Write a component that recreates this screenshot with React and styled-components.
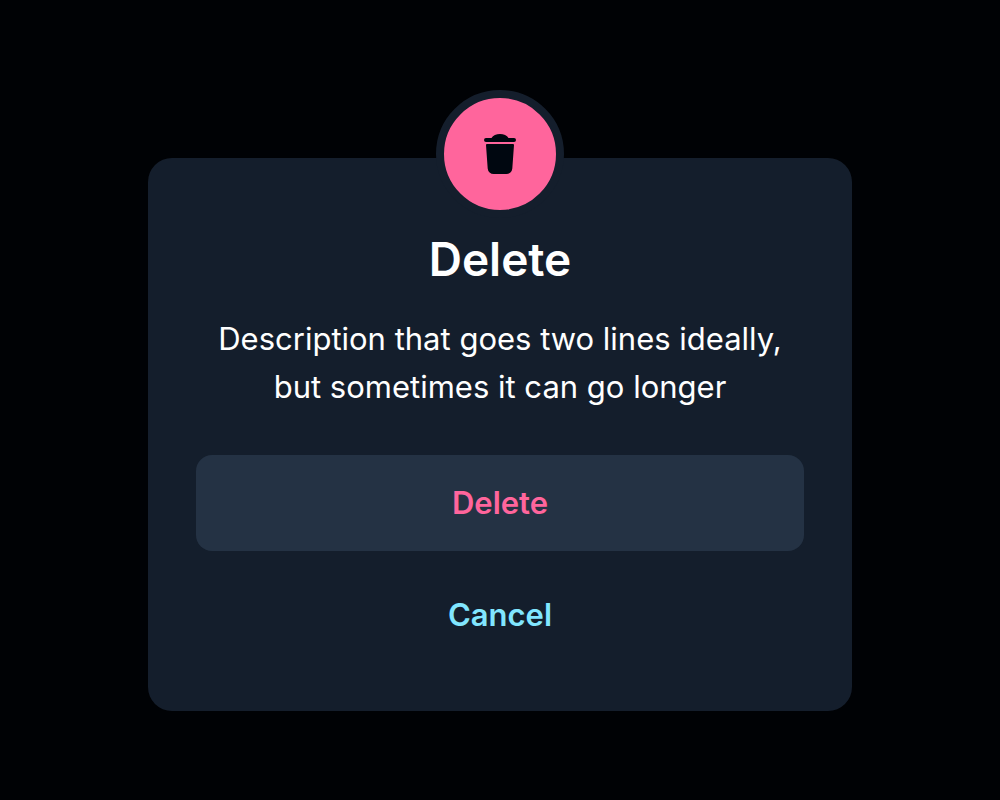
import React from "react";
import styled, { createGlobalStyle } from "styled-components";

const GlobalStyle = createGlobalStyle`
  *, *::before, *::after { box-sizing: border-box; }
  body {
    margin: 0;
    background: #000205;
    color: #ffffff;
    font-family: Inter, "Liberation Sans", sans-serif;
  }
`;

const Page = styled.main`
  min-height: 100vh;
  display: flex;
  align-items: center;
  justify-content: center;
  padding: 90px 24px 21px;
`;

const Dialog = styled.section`
  width: 100%;
  max-width: 704px;
  display: flex;
  flex-direction: column;
  align-items: center;
  padding: 0 48px 48px;
  border-radius: 24px;
  background: #141e2c;
`;

const Badge = styled.div`
  display: grid;
  place-items: center;
  width: 128px;
  height: 128px;
  margin-top: -68px;
  border: 8px solid #141e2c;
  border-radius: 50%;
  background: #ff659c;
`;

const Title = styled.h1`
  margin: 13px 0 0;
  font-size: 46px;
  line-height: 56px;
  font-weight: 600;
`;

const Description = styled.p`
  max-width: 580px;
  margin: 28px 0 0;
  font-size: 31px;
  line-height: 48px;
  text-align: center;
`;

const Actions = styled.div`
  width: 100%;
  display: flex;
  flex-direction: column;
  gap: 16px;
  margin-top: 44px;
`;

const Button = styled.button`
  height: 96px;
  padding: 0 16px 2px;
  border: 0;
  border-radius: 16px;
  background: ${(p) => (p.$tone === "danger" ? "#243244" : "transparent")};
  color: ${(p) => (p.$tone === "danger" ? "#ff659c" : "#81e6ff")};
  font: inherit;
  font-size: 31px;
  font-weight: 600;
  cursor: pointer;
`;

function TrashIcon() {
  return (
    <svg width="48" height="48" viewBox="0 0 48 48" fill="#000710" aria-hidden="true">
      <path d="M15.500 8C17 5.300 20.300 4 24 4s7 1.300 8.500 4H38a2 2 0 0 1 0 4H10a2 2 0 0 1 0-4z" />
      <path d="M11 14h26a1 1 0 0 1 1 1.100l-1.700 23.300A6 6 0 0 1 30.300 44H17.700a6 6 0 0 1-6-5.600L10 15.100A1 1 0 0 1 11 14z" />
    </svg>
  );
}

export default function App() {
  return (
    <>
      <GlobalStyle />
      <Page>
        <Dialog role="dialog" aria-labelledby="title" aria-describedby="description">
          <Badge><TrashIcon /></Badge>
          <Title id="title">Delete</Title>
          <Description id="description">
            Description that goes two lines ideally, but sometimes it can go longer
          </Description>
          <Actions>
            <Button type="button" $tone="danger">Delete</Button>
            <Button type="button">Cancel</Button>
          </Actions>
        </Dialog>
      </Page>
    </>
  );
}
